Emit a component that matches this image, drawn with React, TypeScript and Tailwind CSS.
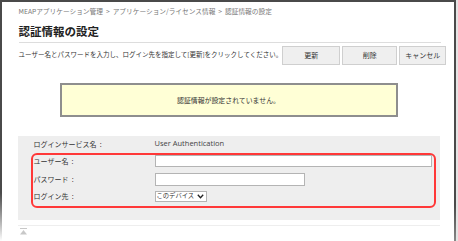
import React from 'react';

const FONT = { fontFamily: '"Noto Sans CJK JP", "Noto Sans", sans-serif' };

const ActionButton: React.FC<{ label: string; w: string }> = ({ label, w }) => (
  <button className={`h-[19px] ${w} border border-[#cfcfcf] bg-[#efefef] text-[7px] text-[#333] leading-none`}>
    {label}
  </button>
);

const FieldRow: React.FC<{ label: string; children: React.ReactNode; cls: string }> = ({ label, children, cls }) => (
  <div className={`flex items-center ${cls}`}>
    <div className="w-[122px] pl-[1px] text-[7px] text-[#333] leading-none whitespace-pre">{label}</div>
    {children}
  </div>
);

export default function App() {
  return (
    <div className="w-[458px] h-[241px] overflow-hidden bg-white flex" style={FONT}>
      <div className="w-[2px] h-full bg-gradient-to-b from-[#4a4a4a] via-[#4a4a4a] via-80% to-white" />
      <div className="flex-1 flex flex-col">
        <div className="h-[2px] bg-[#4a4a4a]" />
        <div className="flex-1 flex flex-col pl-[17px] pr-[13px]">
          <div className="h-[20px] pt-[6px] text-[6.7px] text-[#777] leading-none whitespace-nowrap">
            MEAPアプリケーション管理<span className="mx-[3px]">&gt;</span>アプリケーション/ライセンス情報<span className="mx-[3px]">&gt;</span>認証情報の設定
          </div>
          <div className="h-[21px] flex items-center border-b border-[#dddddd] text-[11.5px] font-bold text-[#222] leading-none">
            認証情報の設定
          </div>
          <div className="h-[22px] flex items-center justify-between pt-[2px]">
            <span className="text-[6.5px] text-[#333] whitespace-nowrap">
              ユーザー名とパスワードを入力し、ログイン先を指定して[更新]をクリックしてください。
            </span>
            <div className="flex gap-[2px] -mr-[5px]">
              <ActionButton label="更新" w="w-[58px]" />
              <ActionButton label="削除" w="w-[55px]" />
              <ActionButton label="キャンセル" w="w-[47px]" />
            </div>
          </div>
          <div className="mt-[18px] pl-[41px]">
            <div className="w-[338px] h-[34px] border-2 border-[#8e8e8e] bg-[#ffffd6] flex items-center justify-center text-[6.9px] text-[#333]">
              認証情報が設定されていません。
            </div>
          </div>
          <div className="mt-[19px] ml-[-1px] w-[422px] h-[84px] bg-[#eeeeee] flex flex-col">
            <div className="h-[16px] flex items-center pl-[16px]">
              <div className="w-[121px] text-[7px] text-[#333] leading-none whitespace-pre">ログインサービス名  :</div>
              <div className="text-[7.5px] text-[#444] leading-none" style={{ fontFamily: '"Open Sans", sans-serif' }}>User Authentication</div>
            </div>
            <div className="mt-[1px] ml-[13px] w-[405px] h-[55px] border-2 border-[#ff3838] rounded-[6px] flex flex-col">
              <FieldRow label="ユーザー名  :" cls="h-[12px]">
                <input className="w-[277px] h-[12px] bg-white border border-[#b4b4b4]" />
              </FieldRow>
              <FieldRow label="パスワード  :" cls="mt-[6px] h-[13px]">
                <input type="password" className="w-[150px] h-[13px] bg-white border border-[#b4b4b4]" />
              </FieldRow>
              <FieldRow label="ログイン先  :" cls="mt-[5px] h-[11px]">
                <div className="w-[52px] h-[11px] bg-white border border-[#b4b4b4] flex items-center justify-between pl-[1px] pr-[2px] text-[6.3px] text-[#333] leading-none whitespace-nowrap">
                  <span>このデバイス</span>
                  <svg width="7" height="5" viewBox="0 0 7 5" className="shrink-0"><path d="M0.8 0.8 L3.5 3.8 L6.2 0.8" fill="none" stroke="#222" strokeWidth="1.3" /></svg>
                </div>
              </FieldRow>
            </div>
          </div>
          <div className="mt-[5px] ml-[-1px] w-[422px] border-t border-[#eeeeee]" />
          <div className="pt-[2px] pl-[1px] leading-none">
            <svg width="7" height="7" viewBox="0 0 7 7">
              <rect x="0" y="0" width="7" height="1" fill="#c8c8c8" />
              <path d="M3.5 2 L7 6.5 L0 6.5 Z" fill="#c8c8c8" />
            </svg>
          </div>
        </div>
      </div>
      <div className="w-[2px] h-full bg-gradient-to-b from-[#4a4a4a] via-[#4a4a4a] via-85% to-[#888]" />
      <div className="w-[3px] h-full bg-[#e4e4e4]" />
    </div>
  );
}
